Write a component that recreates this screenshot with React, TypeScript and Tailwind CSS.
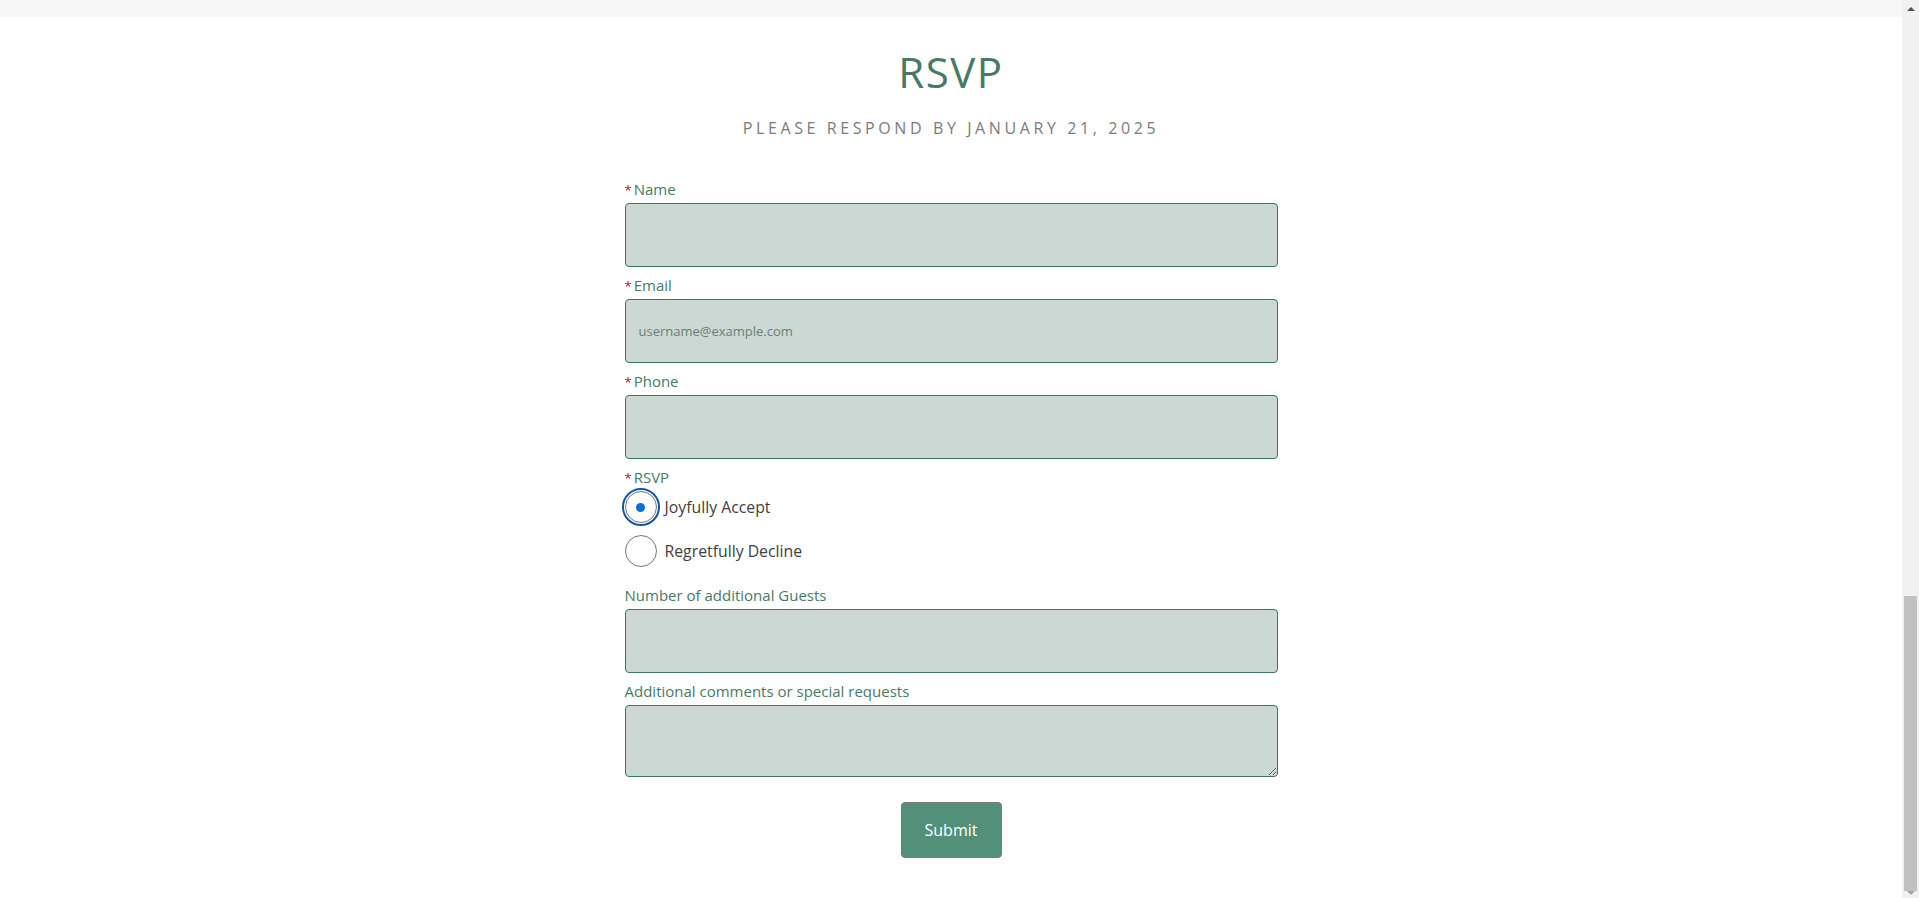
import { ReactNode } from 'react';

const font = "font-['Open_Sans','Liberation_Sans',sans-serif]";

const Label = ({ children, required }: { children: ReactNode; required?: boolean }) => (
  <label className="block h-5 text-[15px] leading-[20px] text-[#467a66] mb-1">
    {required && <span className="text-[#d0021b] text-[13px] leading-none mr-[2px]">*</span>}
    {children}
  </label>
);

const inputCls =
  'block w-full h-[64px] rounded-[4px] border border-[#3e7561] bg-[#cbd8d3] px-[13px] text-[13px] text-[#333] placeholder:text-[#6f7c77] outline-none';

const Radio = ({ label, checked }: { label: string; checked?: boolean }) => (
  <div className="flex items-center h-8">
    <span
      className={
        checked
          ? 'flex h-8 w-8 items-center justify-center rounded-full border border-[#767676] bg-white outline-2 outline-offset-1 outline-[#1553a6]'
          : 'flex h-8 w-8 items-center justify-center rounded-full border border-[#767676] bg-white'
      }
    >
      {checked && <span className="h-[9px] w-[9px] rounded-full bg-[#0b6fd8]" />}
    </span>
    <span className="ml-2 text-[15.8px] leading-[20px] text-[#404040]">{label}</span>
  </div>
);

export default function App() {
  return (
    <div className={`flex h-[898px] overflow-hidden bg-white ${font}`}>
      <main className="flex-1 flex flex-col">
        <div className="h-[17px] bg-[#f7f7f7]" />
        <h1 className="mt-[34px] text-center text-[42px] leading-[42px] text-[#477a66] tracking-[1.5px]">RSVP</h1>
        <p className="mt-6 text-center text-[16px] leading-[22px] tracking-[3.6px] text-[#7b7b7b]">
          PLEASE RESPOND BY JANUARY 21, 2025
        </p>

        <form className="mx-auto mt-10 w-[653px] flex flex-col">
          <div>
            <Label required>Name</Label>
            <input className={inputCls} />
          </div>
          <div className="mt-2">
            <Label required>Email</Label>
            <input className={inputCls} placeholder="username@example.com" />
          </div>
          <div className="mt-2">
            <Label required>Phone</Label>
            <input className={inputCls} />
          </div>
          <div className="mt-2">
            <Label required>RSVP</Label>
            <div className="flex flex-col gap-3">
              <Radio label="Joyfully Accept" checked />
              <Radio label="Regretfully Decline" />
            </div>
          </div>
          <div className="mt-[18px]">
            <Label>Number of additional Guests</Label>
            <input className={inputCls} />
          </div>
          <div className="mt-2">
            <Label>Additional comments or special requests</Label>
            <textarea className="block w-full h-[72px] rounded-[4px] border border-[#3e7561] bg-[#cbd8d3] px-[13px] py-2 text-[13px] outline-none" />
          </div>
          <button
            type="button"
            className="mx-auto mt-[25px] h-[56px] w-[101px] rounded-[4px] border border-[#7a7a7a] bg-[#53907a] text-[16px] text-white"
          >
            Submit
          </button>
        </form>
      </main>

      <aside className="w-[17px] flex flex-col bg-[#f1f1f1]">
        <div className="h-[17px] flex items-center justify-center">
          <span className="block w-0 h-0 border-x-[4px] border-x-transparent border-b-[4px] border-b-[#505050]" />
        </div>
        <div className="flex-1 flex flex-col justify-end px-[2px]">
          <div className="h-[295px] bg-[#c1c1c1]" />
        </div>
        <div className="h-[7px] flex items-start justify-center">
          <span className="block w-0 h-0 border-x-[4px] border-x-transparent border-t-[4px] border-t-[#a3a3a3]" />
        </div>
      </aside>
    </div>
  );
}
